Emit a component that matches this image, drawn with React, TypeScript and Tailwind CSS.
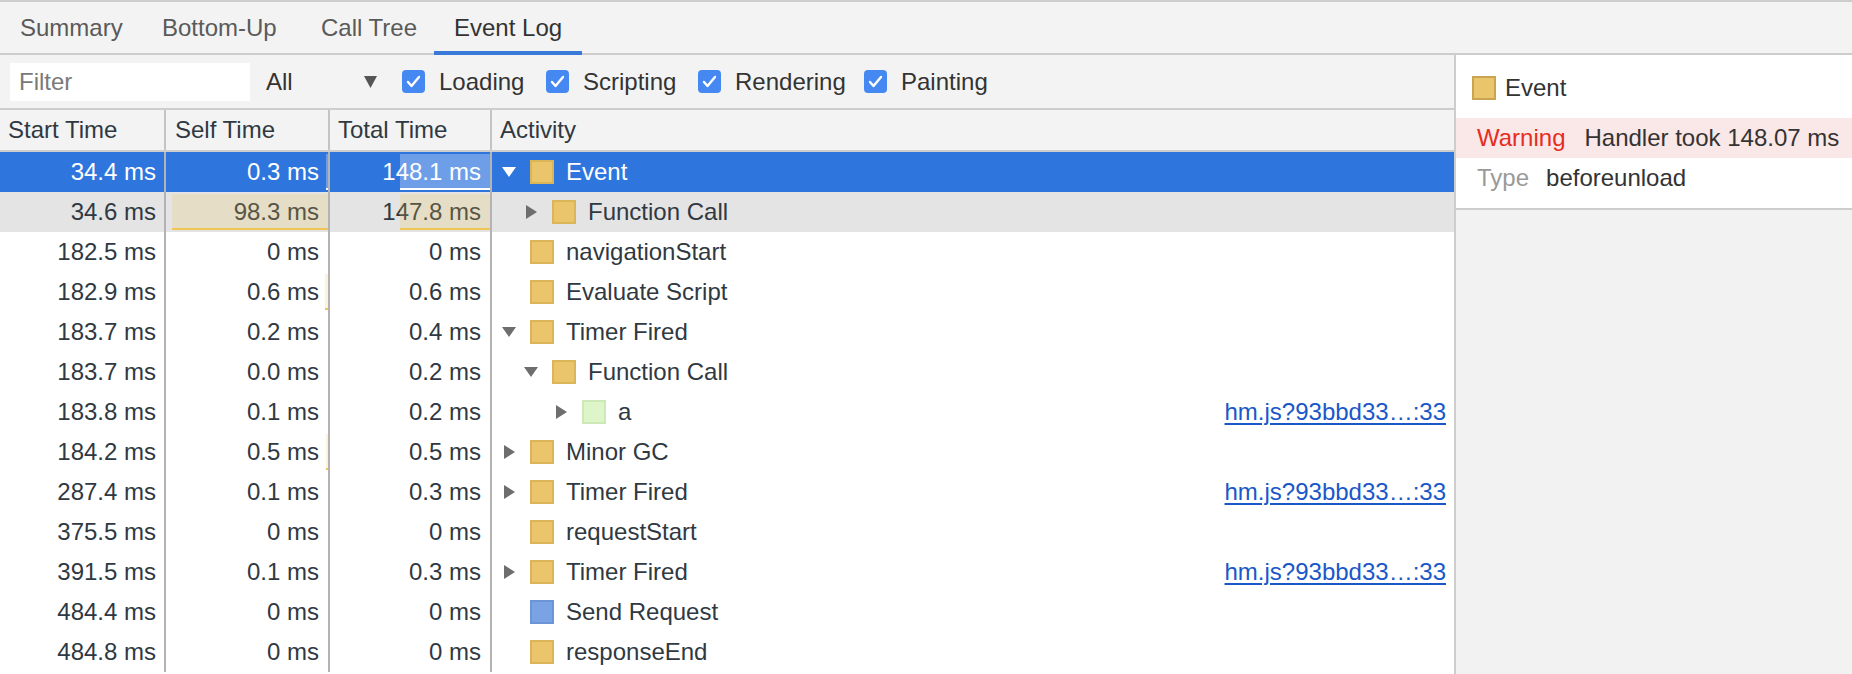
import React from 'react';

type Tone = 'yellow' | 'green' | 'blue';

interface EventRow {
  start: string;
  self: string;
  total: string;
  name: string;
  level: 0 | 1 | 2;
  toggle?: 'open' | 'closed';
  tone: Tone;
  link?: boolean;
  selfBar?: number;
  totalBar?: number;
  state?: 'selected' | 'hover';
}

const rows: EventRow[] = [
  { start: '34.4 ms', self: '0.3 ms', total: '148.1 ms', name: 'Event', level: 0, toggle: 'open', tone: 'yellow', selfBar: 2, totalBar: 90, state: 'selected' },
  { start: '34.6 ms', self: '98.3 ms', total: '147.8 ms', name: 'Function Call', level: 1, toggle: 'closed', tone: 'yellow', selfBar: 156, totalBar: 90, state: 'hover' },
  { start: '182.5 ms', self: '0 ms', total: '0 ms', name: 'navigationStart', level: 0, tone: 'yellow' },
  { start: '182.9 ms', self: '0.6 ms', total: '0.6 ms', name: 'Evaluate Script', level: 0, tone: 'yellow', selfBar: 3 },
  { start: '183.7 ms', self: '0.2 ms', total: '0.4 ms', name: 'Timer Fired', level: 0, toggle: 'open', tone: 'yellow' },
  { start: '183.7 ms', self: '0.0 ms', total: '0.2 ms', name: 'Function Call', level: 1, toggle: 'open', tone: 'yellow' },
  { start: '183.8 ms', self: '0.1 ms', total: '0.2 ms', name: 'a', level: 2, toggle: 'closed', tone: 'green', link: true },
  { start: '184.2 ms', self: '0.5 ms', total: '0.5 ms', name: 'Minor GC', level: 0, toggle: 'closed', tone: 'yellow', selfBar: 2 },
  { start: '287.4 ms', self: '0.1 ms', total: '0.3 ms', name: 'Timer Fired', level: 0, toggle: 'closed', tone: 'yellow', link: true },
  { start: '375.5 ms', self: '0 ms', total: '0 ms', name: 'requestStart', level: 0, tone: 'yellow' },
  { start: '391.5 ms', self: '0.1 ms', total: '0.3 ms', name: 'Timer Fired', level: 0, toggle: 'closed', tone: 'yellow', link: true },
  { start: '484.4 ms', self: '0 ms', total: '0 ms', name: 'Send Request', level: 0, tone: 'blue' },
  { start: '484.8 ms', self: '0 ms', total: '0 ms', name: 'responseEnd', level: 0, tone: 'yellow' },
];

const toneClass: Record<Tone, string> = {
  yellow: 'bg-[#ebc56b] border-[#dbb558]',
  green: 'bg-[#ddf5c9] border-[#cde9b7]',
  blue: 'bg-[#79a3e2] border-[#6b95d6]',
};

const levelPad = ['pl-[10px]', 'pl-[32px]', 'pl-[62px]'];

const Toggle = ({ kind, light }: { kind: 'open' | 'closed'; light: boolean }) => {
  const fill = light ? '#ffffff' : '#6e6e6e';
  return kind === 'open' ? (
    <svg width="14" height="10" viewBox="0 0 14 10">
      <path d="M0 0h14L7 10z" fill={fill} />
    </svg>
  ) : (
    <svg width="11" height="14" viewBox="0 0 11 14">
      <path d="M0 0l11 7L0 14z" fill={fill} />
    </svg>
  );
};

const Check = ({ label, width }: { label: string; width: string }) => (
  <div className={`flex items-center ${width}`}>
    <div className="w-[23px] h-[23px] rounded-[4px] bg-[#4688f1] flex items-center justify-center">
      <svg width="15" height="13" viewBox="0 0 15 13">
        <path d="M2 7l3.5 4L13 2" fill="none" stroke="white" strokeWidth="2.4" strokeLinecap="round" strokeLinejoin="round" />
      </svg>
    </div>
    <span className="ml-[14px] text-[#333]">{label}</span>
  </div>
);

const Bar = ({ width, selected }: { width: number; selected: boolean }) => (
  <div
    className={`absolute right-0 top-[2px] bottom-[2px] border-b-2 ${
      selected ? 'bg-white/30 border-white' : 'bg-[#f0c556]/20 border-[#f0c556]'
    }`}
    style={{ width }}
  />
);

const tabs = [
  { label: 'Summary', w: 'w-[142px]' },
  { label: 'Bottom-Up', w: 'w-[159px]' },
  { label: 'Call Tree', w: 'w-[133px]' },
  { label: 'Event Log', w: 'w-[148px]' },
];

export default function App() {
  return (
    <div className="w-[1852px] h-[674px] overflow-hidden bg-[#f3f3f3] text-[24px] text-[#303942] font-['Liberation_Sans',Arial,sans-serif]">
      {/* tab strip */}
      <div className="flex h-[55px] border-t-2 border-b-2 border-[#cdcdcd] bg-[#f3f3f3]">
        {tabs.map(t =>
          t.label === 'Event Log' ? (
            <div key={t.label} className={`${t.w} pl-[20px] flex items-center -mb-[2px] pt-[2px] border-b-4 border-[#3879d9] text-[#333]`}>
              {t.label}
            </div>
          ) : (
            <div key={t.label} className={`${t.w} pl-[20px] flex items-center text-[#5a5a5a]`}>
              {t.label}
            </div>
          )
        )}
      </div>

      <div className="flex h-[619px]">
        {/* left: toolbar + grid */}
        <div className="w-[1454px] flex flex-col">
          <div className="h-[55px] shrink-0 flex items-center pl-[10px] border-b-2 border-[#cdcdcd]">
            <div className="w-[240px] h-[38px] bg-white flex items-center pl-[9px] text-[#7a7a7a]">Filter</div>
            <div className="ml-[16px] w-[111px] flex items-center justify-between text-[#333]">
              <span>All</span>
              <svg width="13" height="12" viewBox="0 0 13 12">
                <path d="M0 0h13L6.5 12z" fill="#555" />
              </svg>
            </div>
            <div className="ml-[25px] flex items-center">
              <Check label="Loading" width="w-[144px]" />
              <Check label="Scripting" width="w-[152px]" />
              <Check label="Rendering" width="w-[166px]" />
              <Check label="Painting" width="" />
            </div>
          </div>

          <div className="h-[42px] shrink-0 flex border-b-2 border-[#cdcdcd]">
            <div className="w-[166px] border-r-2 border-[#c4c4c4] flex items-center pl-[8px]">Start Time</div>
            <div className="w-[164px] border-r-2 border-[#c4c4c4] flex items-center pl-[9px]">Self Time</div>
            <div className="w-[162px] border-r-2 border-[#c4c4c4] flex items-center pl-[8px]">Total Time</div>
            <div className="flex-1 flex items-center pl-[8px]">Activity</div>
          </div>

          <div className="flex-1 bg-white">
            {rows.map((r, i) => {
              const selected = r.state === 'selected';
              const rowBg = selected ? 'bg-[#2e75dd] text-white' : r.state === 'hover' ? 'bg-[#e4e4e4]' : '';
              return (
                <div key={i} className={`h-[40px] flex ${rowBg}`}>
                  <div className="w-[166px] border-r-2 border-[#b3b3b3] flex items-center justify-end pr-[8px]">{r.start}</div>
                  <div className="relative w-[164px] border-r-2 border-[#b3b3b3] flex items-center justify-end pr-[9px]">
                    {r.self}
                    {r.selfBar ? <Bar width={r.selfBar} selected={selected} /> : null}
                  </div>
                  <div className="relative w-[162px] border-r-2 border-[#b3b3b3] flex items-center justify-end pr-[9px]">
                    {r.total}
                    {r.totalBar ? <Bar width={r.totalBar} selected={selected} /> : null}
                  </div>
                  <div className={`flex-1 flex items-center pr-[8px] ${levelPad[r.level]}`}>
                    <div className="w-[28px] flex">
                      <div className="w-[14px] flex justify-center">
                        {r.toggle ? <Toggle kind={r.toggle} light={selected} /> : null}
                      </div>
                    </div>
                    <div className={`w-[24px] h-[24px] border-2 ${toneClass[r.tone]}`} />
                    <span className="ml-[12px]">{r.name}</span>
                    {r.link ? (
                      <span className="ml-auto text-[#1a57c9] underline underline-offset-[3px]">hm.js?93bbd33…:33</span>
                    ) : null}
                  </div>
                </div>
              );
            })}
          </div>
        </div>

        {/* right: details */}
        <div className="flex-1 border-l-2 border-[#cdcdcd] bg-[#f2f2f2]">
          <div className="bg-white border-b-2 border-[#cdcdcd] pb-[10px]">
            <div className="h-[63px] flex items-center pl-[16px] pt-[2px]">
              <div className="w-[24px] h-[24px] border-2 bg-[#eac56c] border-[#c9a552]" />
              <span className="ml-[9px] text-[#333]">Event</span>
            </div>
            <div className="h-[40px] flex items-center pl-[21px] bg-[#fae7e7]">
              <span className="text-[#e52d22]">Warning</span>
              <span className="ml-[19px] text-[#333]">Handler took 148.07 ms</span>
            </div>
            <div className="h-[40px] flex items-center pl-[21px]">
              <span className="text-[#9a9a9a]">Type</span>
              <span className="ml-[17px] text-[#333]">beforeunload</span>
            </div>
          </div>
        </div>
      </div>
    </div>
  );
}
